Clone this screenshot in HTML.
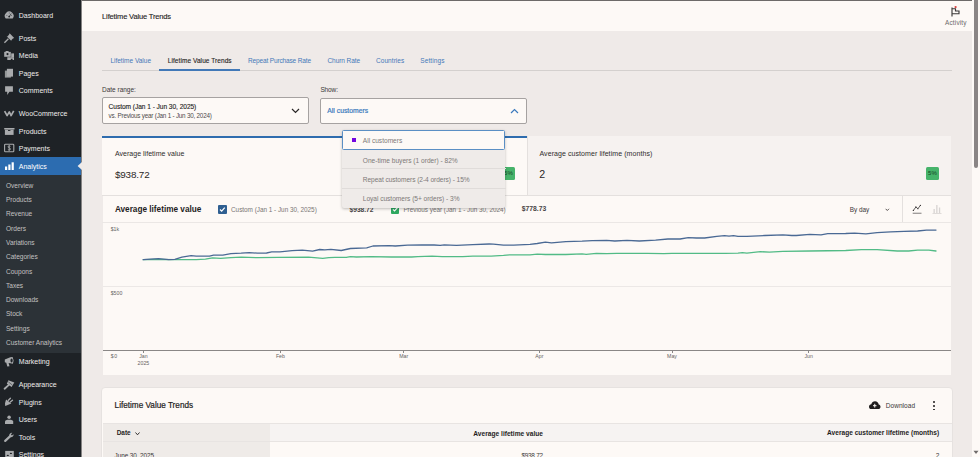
<!DOCTYPE html>
<html><head><meta charset="utf-8"><style>
html,body{margin:0;padding:0;width:980px;height:457px;overflow:hidden;background:#efeae8}
body{position:relative;font-family:"Liberation Sans",sans-serif}
div,span,svg{position:absolute}
span{white-space:nowrap}
</style></head><body>
<div style="left:0.00px;top:0.00px;width:980.00px;height:457.00px;background:#efeae8;"></div>
<div style="left:0.00px;top:0.00px;width:81.00px;height:457.00px;background:#1e2226;"></div>
<div style="left:81.00px;top:0.00px;width:1.00px;height:457.00px;background:#858383;"></div>
<div style="left:82.00px;top:0.00px;width:891.00px;height:31.00px;background:#fdf9f6;"></div>
<div style="left:82.00px;top:0.00px;width:891.00px;height:1.00px;background:#6d6a69;"></div>
<div style="left:0.00px;top:157.40px;width:81.00px;height:17.50px;background:#2c6cb0;"></div>
<div style="left:0.00px;top:174.90px;width:81.00px;height:177.90px;background:#2c3237;"></div>
<svg style="left:77px;top:162.4px;width:5px;height:8px;position:absolute" viewBox="0 0 5 8"><path d="M5 0 L0.6 4 L5 8Z" fill="#efeae8"/></svg>
<div style="left:102.00px;top:70.20px;width:849.50px;height:1.00px;background:#d4d0ce;"></div>
<div style="left:158.90px;top:69.40px;width:81.10px;height:1.60px;background:#4279b8;"></div>
<div style="left:102.00px;top:97.30px;width:206.90px;height:26.90px;background:#fdf9f6;border:1px solid #a6a2a1;border-radius:2px;box-sizing:border-box"></div>
<svg style="left:291px;top:108.2px;width:9px;height:6px;position:absolute" viewBox="0 0 9 6"><path d="M1 1 L4.5 4.5 L8 1" fill="none" stroke="#2a2727" stroke-width="1.2"/></svg>
<div style="left:320.20px;top:97.90px;width:207.10px;height:26.30px;background:#fdf9f6;border:1px solid #a6a2a1;border-radius:2px;box-sizing:border-box"></div>
<svg style="left:510px;top:108.2px;width:9px;height:6px;position:absolute" viewBox="0 0 9 6"><path d="M1 5 L4.5 1.5 L8 5" fill="none" stroke="#3a79bd" stroke-width="1.2"/></svg>
<div style="left:102.00px;top:135.70px;width:425.00px;height:59.60px;background:#fdf9f6;"></div>
<div style="left:527.00px;top:135.70px;width:424.00px;height:59.60px;background:#f6f2f0;"></div>
<div style="left:527.00px;top:135.70px;width:1.00px;height:59.60px;background:#e4e0de;"></div>
<div style="left:102.00px;top:135.70px;width:425.00px;height:2.10px;background:#2e6cae;"></div>
<div style="left:102.00px;top:195.00px;width:849.00px;height:1.00px;background:#e4e0de;"></div>
<div style="left:925.90px;top:166.50px;width:13.10px;height:13.10px;background:#46b36a;border-radius:1.5px"></div>
<div style="left:501.50px;top:166.70px;width:13.10px;height:13.10px;background:#46b36a;border-radius:1.5px"></div>
<div style="left:102.60px;top:195.30px;width:848.40px;height:180.00px;background:#fdf9f6;"></div>
<div style="left:102.00px;top:195.00px;width:849.00px;height:1.00px;background:#e4e0de;"></div>
<div style="left:102.00px;top:222.00px;width:849.00px;height:1.00px;background:#ebe7e5;"></div>
<div style="left:902.20px;top:195.30px;width:1.00px;height:27.00px;background:#e4e0de;"></div>
<div style="left:218.20px;top:205.00px;width:8.70px;height:8.70px;background:#2f5f91;border-radius:1px"></div>
<svg style="left:218.2px;top:205px;width:8.7px;height:8.7px;position:absolute" viewBox="0 0 10 10"><path d="M2.3 5.2 L4.2 7 L7.8 3" fill="none" stroke="#fff" stroke-width="1.4"/></svg>
<div style="left:390.80px;top:205.40px;width:8.40px;height:8.40px;background:#2ea860;border-radius:1px"></div>
<svg style="left:390.8px;top:205.4px;width:8.4px;height:8.4px;position:absolute" viewBox="0 0 10 10"><path d="M2.3 5.2 L4.2 7 L7.8 3" fill="none" stroke="#fff" stroke-width="1.4"/></svg>
<svg style="left:884.6px;top:208.2px;width:5px;height:3.5px;position:absolute" viewBox="0 0 5 3.5"><path d="M0.6 0.8 L2.3 2.5 L4 0.8" fill="none" stroke="#3b3838" stroke-width="0.85"/></svg>
<svg style="left:911.5px;top:203.5px;width:10.5px;height:10.5px;position:absolute" viewBox="0 0 10.5 10.5"><path d="M1.4 6.4 L3.9 3.0 L5.9 4.7 L8.4 1.4" fill="none" stroke="#3b3838" stroke-width="0.8"/><circle cx="1.4" cy="6.4" r="0.65" fill="#3b3838"/><circle cx="3.9" cy="3.0" r="0.65" fill="#3b3838"/><circle cx="5.9" cy="4.7" r="0.65" fill="#3b3838"/><circle cx="8.4" cy="1.4" r="0.65" fill="#3b3838"/><rect x="0.7" y="8.7" width="8.8" height="1.1" fill="#8a8786"/></svg>
<svg style="left:931.8px;top:203.5px;width:10.5px;height:10.5px;position:absolute" viewBox="0 0 10.5 10.5"><rect x="1.5" y="5" width="1.3" height="4" fill="#d8d4d2"/><rect x="4.2" y="1" width="1.3" height="8" fill="#d8d4d2"/><rect x="6.9" y="3.5" width="1.3" height="5.5" fill="#d8d4d2"/><rect x="0.5" y="9.2" width="9" height="0.9" fill="#d8d4d2"/></svg>
<div style="left:102.50px;top:286.40px;width:848.50px;height:0.80px;background:#ece8e6;"></div>
<div style="left:102.50px;top:350.00px;width:848.50px;height:0.90px;background:#8a8786;"></div>
<div style="left:143.00px;top:350.50px;width:0.80px;height:2.20px;background:#8a8786;"></div>
<div style="left:280.00px;top:350.50px;width:0.80px;height:2.20px;background:#8a8786;"></div>
<div style="left:403.30px;top:350.50px;width:0.80px;height:2.20px;background:#8a8786;"></div>
<div style="left:539.00px;top:350.50px;width:0.80px;height:2.20px;background:#8a8786;"></div>
<div style="left:671.60px;top:350.50px;width:0.80px;height:2.20px;background:#8a8786;"></div>
<div style="left:808.20px;top:350.50px;width:0.80px;height:2.20px;background:#8a8786;"></div>
<svg style="left:0;top:0;width:980px;height:457px;position:absolute" viewBox="0 0 980 457"><polyline points="143.2,259.7 155.4,259.3 175.8,259.7 196.2,259.7 205.4,259.1 212.6,257.9 220.7,258.3 230.9,257.7 241.1,257.2 257.4,257.7 277.9,257.4 308.5,257.2 322.8,258.3 328.9,257.7 335.0,257.4 346.3,257.4 350.4,256.6 356.5,257.0 370.8,256.6 391.2,257.0 411.6,257.0 417.8,256.6 432.0,256.2 442.2,256.6 462.7,256.6 472.9,256.2 491.2,256.2 503.5,255.4 509.6,254.8 530.0,254.8 537.2,254.1 545.4,254.5 565.8,254.5 582.1,253.9 586.2,254.3 596.4,253.3 606.6,253.7 616.8,253.3 647.4,253.3 663.8,253.7 671.9,253.3 725.0,253.3 738.0,253.2 742.4,252.6 746.9,253.2 760.4,251.7 769.4,252.1 782.9,251.4 809.8,251.0 845.7,250.5 861.4,249.6 877.1,249.6 897.3,251.0 908.6,251.0 917.6,250.1 928.8,250.1 936.0,251.0" fill="none" stroke="#52bb86" stroke-width="1.3" stroke-linejoin="round" stroke-linecap="round"/><polyline points="143.2,259.7 158.5,258.7 168.7,259.7 174.8,259.3 181.9,257.2 191.1,255.6 196.2,256.2 209.5,256.2 213.6,255.2 222.8,255.2 230.9,253.6 241.1,253.2 249.3,252.6 257.4,253.2 266.6,253.0 271.7,251.9 279.9,251.9 292.1,250.7 302.3,250.1 312.6,251.1 319.7,249.5 324.8,249.9 330.9,249.3 341.2,250.5 350.4,248.5 366.7,247.9 372.9,246.0 389.2,245.6 395.3,246.0 407.6,245.2 421.8,244.8 434.1,245.0 440.2,245.4 444.3,244.8 456.5,245.4 472.9,244.6 489.2,244.0 493.3,244.2 503.5,245.2 513.7,245.2 530.0,244.4 537.2,243.5 545.4,242.2 551.5,242.9 565.8,241.6 582.1,241.2 592.3,240.6 606.6,240.4 614.8,241.0 627.0,240.4 639.3,241.0 655.6,240.2 667.9,239.0 680.1,239.0 688.3,237.6 696.4,238.0 704.6,238.0 716.8,236.3 724.5,235.7 729.0,236.2 733.5,235.7 738.0,236.4 746.9,236.4 764.9,235.5 782.9,234.8 791.8,235.5 796.3,235.5 809.8,234.4 821.0,234.8 827.8,233.7 845.7,233.5 854.7,233.2 865.9,233.9 877.1,232.6 890.6,231.9 904.1,231.4 917.6,231.0 926.5,230.1 936.0,230.1" fill="none" stroke="#4a6994" stroke-width="1.3" stroke-linejoin="round" stroke-linecap="round"/></svg>
<div style="left:101.30px;top:387.30px;width:851.50px;height:80.00px;background:#fdf9f6;border-radius:4px;border:1px solid #e6e2e0;box-sizing:border-box"></div>
<svg style="left:869px;top:400.5px;width:11.5px;height:8.6px;position:absolute" viewBox="0 0 23 17"><path d="M5.5 16.5 C2 16.5 0 14 0 11.3 C0 8.6 2 6.6 4.6 6.4 C5.6 2.7 8.4 0.3 12 0.3 C16 0.3 19 3.2 19.4 6.8 C21.6 7.3 23 9.1 23 11.5 C23 14.3 20.9 16.5 18 16.5Z" fill="#1f1d1d"/><path d="M11.5 5.5 V13 M8 9.3 H15" stroke="#fdf9f6" stroke-width="2"/></svg>
<div style="left:933.20px;top:400.90px;width:1.90px;height:1.90px;background:#1f1d1d;border-radius:50%"></div>
<div style="left:933.20px;top:404.70px;width:1.90px;height:1.90px;background:#1f1d1d;border-radius:50%"></div>
<div style="left:933.20px;top:408.50px;width:1.90px;height:1.90px;background:#1f1d1d;border-radius:50%"></div>
<div style="left:102.80px;top:423.00px;width:849.00px;height:18.50px;background:#f6f3f2;"></div>
<div style="left:102.80px;top:423.00px;width:167.60px;height:40.00px;background:#efebe8;"></div>
<div style="left:102.80px;top:422.80px;width:849.00px;height:0.80px;background:#e8e4e2;"></div>
<div style="left:102.80px;top:441.30px;width:849.00px;height:0.80px;background:#e8e4e2;"></div>
<svg style="left:134.8px;top:431.5px;width:5px;height:3.5px;position:absolute" viewBox="0 0 5 3.5"><path d="M0.5 0.5 L2.5 2.8 L4.5 0.5" fill="none" stroke="#1f1d1d" stroke-width="0.9"/></svg>
<div style="left:341.6px;top:130.3px;width:163.5px;height:77.5px;background:#efebe9;border-radius:2px;box-shadow:0 1px 3px rgba(0,0,0,.25);z-index:10"></div>
<div style="left:341.80px;top:130.30px;width:163.50px;height:19.40px;background:#fdf9f6;border:1px solid #5b8fc4;border-radius:1.5px;box-sizing:border-box;z-index:10"></div>
<div style="left:341.60px;top:168.30px;width:164.00px;height:0.70px;background:#e0dcda;z-index:10"></div>
<div style="left:341.60px;top:188.20px;width:164.00px;height:0.70px;background:#e0dcda;z-index:10"></div>
<div style="left:351.60px;top:138.00px;width:4.40px;height:4.40px;background:#7205e0;z-index:10"></div>
<svg style="left:950px;top:4.5px;width:11px;height:12px;position:absolute" viewBox="0 0 11 12"><path d="M2 2.6 V11.5 M2 3.7 H5.5 V6 H9 V8.7 H2" fill="none" stroke="#3b3838" stroke-width="1.15"/><circle cx="5.6" cy="2.1" r="1.15" fill="#d94040"/></svg>
<div style="left:972.00px;top:0.00px;width:8.00px;height:457.00px;background:#fdf9f6;"></div>
<div style="left:973.80px;top:0.00px;width:4.60px;height:168.00px;background:#8a8585;border-radius:0 0 2.3px 2.3px"></div>
<svg style="left:973px;top:450px;width:6px;height:5px;position:absolute" viewBox="0 0 6 5"><path d="M0.5 0.8 H5.5 L3 4Z" fill="#6f6b6b"/></svg>
<svg style="left:2px;top:8px;width:16px;height:16px;position:absolute" viewBox="0 0 16 16"><path d="M3.7 10.6 A4.4 4.4 0 1 1 10.7 10.6 Z" fill="#a9abad"/><circle cx="7.2" cy="8.6" r="0.9" fill="#1e2226"/><path d="M7.2 8.6 L9.2 5.6" stroke="#1e2226" stroke-width="0.7"/><circle cx="4.9" cy="7.4" r="0.45" fill="#1e2226"/><circle cx="7.2" cy="5" r="0.45" fill="#1e2226"/><circle cx="9.6" cy="7.4" r="0.45" fill="#1e2226"/></svg>
<svg style="left:2px;top:30px;width:16px;height:16px;position:absolute" viewBox="0 0 16 16"><path d="M7.6 3.3 L12.2 7.9 L10.9 8.5 L9.3 10.2 L9.4 11 L4.6 6.3 L5.4 6.4 L7 4.7 Z" fill="#a9abad"/><path d="M2.4 12.8 L6.4 8.8" stroke="#a9abad" stroke-width="1.3"/></svg>
<svg style="left:2px;top:48px;width:16px;height:16px;position:absolute" viewBox="0 0 16 16"><rect x="2.2" y="3.9" width="6.6" height="4.9" fill="#a9abad"/><rect x="3.6" y="3" width="3" height="1.2" fill="#a9abad"/><circle cx="5.5" cy="6.1" r="1.1" fill="#1e2226"/><path d="M5.3 12 V9.3 H12 V12 H10.6 V10.8 L8.8 10.8 V12 Z" fill="#a9abad"/><rect x="9.2" y="5.4" width="2.8" height="4" fill="#a9abad"/></svg>
<svg style="left:2px;top:65px;width:16px;height:16px;position:absolute" viewBox="0 0 16 16"><rect x="2.9" y="5.6" width="6" height="7" fill="#a9abad" opacity="0.85"/><rect x="4.9" y="3.8" width="6.1" height="7.8" fill="#a9abad"/></svg>
<svg style="left:2px;top:82px;width:16px;height:16px;position:absolute" viewBox="0 0 16 16"><path d="M3.1 4.2 H10.9 V9.8 H7.4 L5.2 13 L5.2 9.8 H3.1 Z" fill="#a9abad"/></svg>
<svg style="left:2px;top:105px;width:16px;height:16px;position:absolute" viewBox="0 0 16 16"><path d="M2.6 6.2 L5.1 10.6 L7.3 6.9 L9.1 10.6 L11.7 5.9" fill="none" stroke="#a9abad" stroke-width="1.7" stroke-linejoin="round"/></svg>
<svg style="left:2px;top:123px;width:16px;height:16px;position:absolute" viewBox="0 0 16 16"><rect x="2.2" y="5" width="10.3" height="1.5" fill="#a9abad"/><rect x="2.9" y="6.6" width="8.7" height="5.3" fill="#a9abad"/><rect x="6" y="7" width="2.4" height="0.9" fill="#1e2226"/></svg>
<svg style="left:2px;top:140px;width:16px;height:16px;position:absolute" viewBox="0 0 16 16"><rect x="2.6" y="4.3" width="9.2" height="7.4" rx="0.8" fill="none" stroke="#a9abad" stroke-width="1.1"/><path d="M8.4 6.3 C7.8 5.7 6 5.8 6 6.9 C6 8.1 8.5 7.7 8.5 9 C8.5 10.1 6.6 10.2 5.9 9.5 M7.2 5.2 V10.8" fill="none" stroke="#a9abad" stroke-width="0.9"/></svg>
<svg style="left:4.9px;top:161.8px;width:9px;height:8.5px;position:absolute" viewBox="0 0 9 8.5"><rect x="0" y="4.5" width="2.2" height="4" fill="#fff"/><rect x="3.3" y="2.5" width="2.2" height="6" fill="#fff"/><rect x="6.6" y="0.3" width="2.2" height="8.2" fill="#fff"/></svg>
<svg style="left:2px;top:354px;width:16px;height:16px;position:absolute" viewBox="0 0 16 16"><path d="M2.8 5.6 L8.3 3.3 L10.6 3 L11.6 6.5 L10.9 9.8 L8.3 9.3 L6.6 9.1 L7.5 12.3 L5.3 12.5 L4.3 8.7 L2.8 8.3 Z" fill="#a9abad"/><ellipse cx="9.6" cy="6.4" rx="1.1" ry="2" fill="#1e2226"/></svg>
<svg style="left:2px;top:377px;width:16px;height:16px;position:absolute" viewBox="0 0 16 16"><path d="M6.4 3.2 L12.3 5.4 L9.6 9.9 L4.8 6.7 Z" fill="#a9abad"/><path d="M6.3 4.8 L10.3 8" stroke="#1e2226" stroke-width="0.5"/><path d="M2.6 11.7 L6.6 8.1" stroke="#a9abad" stroke-width="1.9" stroke-linecap="round"/></svg>
<svg style="left:2px;top:394px;width:16px;height:16px;position:absolute" viewBox="0 0 16 16"><path d="M4.1 5.4 L9.3 9.6 L5.2 11.3 L3.2 12 L3 9.3 Z" fill="#a9abad"/><path d="M6.4 6.2 L8.4 4.2 M8.3 8 L10.5 6.2" stroke="#a9abad" stroke-width="1.3" stroke-linecap="round"/></svg>
<svg style="left:2px;top:411px;width:16px;height:16px;position:absolute" viewBox="0 0 16 16"><circle cx="7.1" cy="6.2" r="1.75" fill="#a9abad"/><path d="M3 12.9 V10.6 C3 9.3 4.5 8.8 7.1 8.8 C9.7 8.8 11.2 9.3 11.2 10.6 V12.9 Z" fill="#a9abad"/></svg>
<svg style="left:2px;top:429px;width:16px;height:16px;position:absolute" viewBox="0 0 16 16"><path d="M3.2 11.9 L8 7.4" stroke="#a9abad" stroke-width="2.2" stroke-linecap="round"/><path d="M7.2 6.7 A2.7 2.7 0 0 1 10.3 3.8 L8.9 5.4 L9.9 6.6 L11.6 5.3 A2.7 2.7 0 0 1 8.5 8.3 Z" fill="#a9abad"/></svg>
<svg style="left:2px;top:441px;width:16px;height:16px;position:absolute" viewBox="0 0 16 16"><rect x="3.2" y="9.9" width="8.6" height="8" fill="#a9abad"/><ellipse cx="8.9" cy="12.4" rx="1.1" ry="0.7" fill="#1e2226"/><ellipse cx="5.8" cy="14.4" rx="1.1" ry="0.7" fill="#1e2226"/></svg>
<span style="left:18.80px;top:11.87px;font-size:7.000px;line-height:7.000px;font-weight:400;color:#efedec;letter-spacing:0.000px;">Dashboard</span>
<span style="left:18.80px;top:35.17px;font-size:7.000px;line-height:7.000px;font-weight:400;color:#efedec;letter-spacing:0.000px;">Posts</span>
<span style="left:18.80px;top:52.47px;font-size:7.000px;line-height:7.000px;font-weight:400;color:#efedec;letter-spacing:0.000px;">Media</span>
<span style="left:18.80px;top:69.87px;font-size:7.000px;line-height:7.000px;font-weight:400;color:#efedec;letter-spacing:0.000px;">Pages</span>
<span style="left:18.80px;top:87.17px;font-size:7.000px;line-height:7.000px;font-weight:400;color:#efedec;letter-spacing:0.000px;">Comments</span>
<span style="left:18.80px;top:110.17px;font-size:7.000px;line-height:7.000px;font-weight:400;color:#efedec;letter-spacing:0.000px;">WooCommerce</span>
<span style="left:18.80px;top:127.57px;font-size:7.000px;line-height:7.000px;font-weight:400;color:#efedec;letter-spacing:0.000px;">Products</span>
<span style="left:18.80px;top:144.87px;font-size:7.000px;line-height:7.000px;font-weight:400;color:#efedec;letter-spacing:0.000px;">Payments</span>
<span style="left:18.80px;top:162.67px;font-size:7.000px;line-height:7.000px;font-weight:400;color:#ffffff;letter-spacing:0.000px;">Analytics</span>
<span style="left:18.80px;top:358.27px;font-size:7.000px;line-height:7.000px;font-weight:400;color:#efedec;letter-spacing:0.000px;">Marketing</span>
<span style="left:18.80px;top:381.27px;font-size:7.000px;line-height:7.000px;font-weight:400;color:#efedec;letter-spacing:0.000px;">Appearance</span>
<span style="left:18.80px;top:398.57px;font-size:7.000px;line-height:7.000px;font-weight:400;color:#efedec;letter-spacing:0.000px;">Plugins</span>
<span style="left:18.80px;top:416.17px;font-size:7.000px;line-height:7.000px;font-weight:400;color:#efedec;letter-spacing:0.000px;">Users</span>
<span style="left:18.80px;top:433.77px;font-size:7.000px;line-height:7.000px;font-weight:400;color:#efedec;letter-spacing:0.000px;">Tools</span>
<span style="left:18.80px;top:450.87px;font-size:7.000px;line-height:7.000px;font-weight:400;color:#efedec;letter-spacing:0.000px;">Settings</span>
<span style="left:6.00px;top:182.69px;font-size:6.550px;line-height:6.550px;font-weight:400;color:#c3c1c1;letter-spacing:0.000px;">Overview</span>
<span style="left:6.00px;top:197.00px;font-size:6.550px;line-height:6.550px;font-weight:400;color:#c3c1c1;letter-spacing:0.000px;">Products</span>
<span style="left:6.00px;top:211.31px;font-size:6.550px;line-height:6.550px;font-weight:400;color:#c3c1c1;letter-spacing:0.000px;">Revenue</span>
<span style="left:6.00px;top:225.62px;font-size:6.550px;line-height:6.550px;font-weight:400;color:#c3c1c1;letter-spacing:0.000px;">Orders</span>
<span style="left:6.00px;top:239.93px;font-size:6.550px;line-height:6.550px;font-weight:400;color:#c3c1c1;letter-spacing:0.000px;">Variations</span>
<span style="left:6.00px;top:254.24px;font-size:6.550px;line-height:6.550px;font-weight:400;color:#c3c1c1;letter-spacing:0.000px;">Categories</span>
<span style="left:6.00px;top:268.55px;font-size:6.550px;line-height:6.550px;font-weight:400;color:#c3c1c1;letter-spacing:0.000px;">Coupons</span>
<span style="left:6.00px;top:282.86px;font-size:6.550px;line-height:6.550px;font-weight:400;color:#c3c1c1;letter-spacing:0.000px;">Taxes</span>
<span style="left:6.00px;top:297.17px;font-size:6.550px;line-height:6.550px;font-weight:400;color:#c3c1c1;letter-spacing:0.000px;">Downloads</span>
<span style="left:6.00px;top:311.48px;font-size:6.550px;line-height:6.550px;font-weight:400;color:#c3c1c1;letter-spacing:0.000px;">Stock</span>
<span style="left:6.00px;top:325.79px;font-size:6.550px;line-height:6.550px;font-weight:400;color:#c3c1c1;letter-spacing:0.000px;">Settings</span>
<span style="left:6.00px;top:340.10px;font-size:6.550px;line-height:6.550px;font-weight:400;color:#c3c1c1;letter-spacing:0.000px;">Customer Analytics</span>
<span style="left:102.10px;top:12.82px;font-size:7.500px;line-height:7.500px;font-weight:400;color:#1f1d1d;letter-spacing:-0.149px;-webkit-text-stroke:0.12px #1f1d1d">Lifetime Value Trends</span>
<span style="left:945.05px;top:19.86px;font-size:6.400px;line-height:6.400px;font-weight:400;color:#6c6a6a;letter-spacing:0.176px;">Activity</span>
<span style="left:110.40px;top:57.71px;font-size:6.500px;line-height:6.500px;font-weight:400;color:#4479b8;letter-spacing:-0.008px;">Lifetime Value</span>
<span style="left:167.80px;top:57.71px;font-size:6.500px;line-height:6.500px;font-weight:400;color:#1f1d1d;letter-spacing:0.071px;-webkit-text-stroke:0.12px #1f1d1d">Lifetime Value Trends</span>
<span style="left:248.00px;top:57.71px;font-size:6.500px;line-height:6.500px;font-weight:400;color:#4479b8;letter-spacing:-0.145px;">Repeat Purchase Rate</span>
<span style="left:327.50px;top:57.71px;font-size:6.500px;line-height:6.500px;font-weight:400;color:#4479b8;letter-spacing:-0.082px;">Churn Rate</span>
<span style="left:376.00px;top:57.71px;font-size:6.500px;line-height:6.500px;font-weight:400;color:#4479b8;letter-spacing:0.060px;">Countries</span>
<span style="left:420.30px;top:57.71px;font-size:6.500px;line-height:6.500px;font-weight:400;color:#4479b8;letter-spacing:0.102px;">Settings</span>
<span style="left:102.00px;top:87.02px;font-size:6.500px;line-height:6.500px;font-weight:400;color:#3b3838;letter-spacing:-0.007px;">Date range:</span>
<span style="left:320.40px;top:87.02px;font-size:6.500px;line-height:6.500px;font-weight:400;color:#3b3838;letter-spacing:-0.116px;">Show:</span>
<span style="left:108.60px;top:103.57px;font-size:6.600px;line-height:6.600px;font-weight:400;color:#1f1d1d;letter-spacing:-0.048px;-webkit-text-stroke:0.12px #1f1d1d">Custom (Jan 1 - Jun 30, 2025)</span>
<span style="left:108.60px;top:112.71px;font-size:6.300px;line-height:6.300px;font-weight:400;color:#4f4b4b;letter-spacing:-0.216px;">vs. Previous year (Jan 1 - Jun 30, 2024)</span>
<span style="left:327.30px;top:108.07px;font-size:6.800px;line-height:6.800px;font-weight:400;color:#3a79bd;letter-spacing:0.007px;-webkit-text-stroke:0.2px #3a79bd">All customers</span>
<span style="left:114.90px;top:149.57px;font-size:7.000px;line-height:7.000px;font-weight:400;color:#2f2c2c;letter-spacing:0.031px;">Average lifetime value</span>
<span style="left:114.90px;top:170.05px;font-size:9.900px;line-height:9.900px;font-weight:400;color:#2a2727;letter-spacing:-0.148px;">$938.72</span>
<span style="left:539.50px;top:149.57px;font-size:7.000px;line-height:7.000px;font-weight:400;color:#2f2c2c;letter-spacing:0.074px;">Average customer lifetime (months)</span>
<span style="left:539.30px;top:169.21px;font-size:10.600px;line-height:10.600px;font-weight:400;color:#2a2727;letter-spacing:0.000px;">2</span>
<span style="left:928.06px;top:170.46px;font-size:6.000px;line-height:6.000px;font-weight:400;color:#183f24;letter-spacing:0.000px;">5%</span>
<span style="left:504.06px;top:170.46px;font-size:6.000px;line-height:6.000px;font-weight:400;color:#183f24;letter-spacing:0.000px;">5%</span>
<span style="left:114.90px;top:206.36px;font-size:8.239px;line-height:8.239px;font-weight:700;color:#1f1d1d;letter-spacing:0.000px;">Average lifetime value</span>
<span style="left:231.00px;top:206.86px;font-size:6.400px;line-height:6.400px;font-weight:400;color:#7a7675;letter-spacing:-0.019px;">Custom (Jan 1 - Jun 30, 2025)</span>
<span style="left:349.60px;top:206.77px;font-size:6.584px;line-height:6.584px;font-weight:700;color:#4a4646;letter-spacing:0.000px;">$938.72</span>
<span style="left:403.40px;top:206.66px;font-size:6.400px;line-height:6.400px;font-weight:400;color:#7a7675;letter-spacing:-0.029px;">Previous year (Jan 1 - Jun 30, 2024)</span>
<span style="left:521.70px;top:206.37px;font-size:6.805px;line-height:6.805px;font-weight:700;color:#4a4646;letter-spacing:0.000px;">$778.73</span>
<span style="left:849.70px;top:206.86px;font-size:6.400px;line-height:6.400px;font-weight:400;color:#3b3838;letter-spacing:0.007px;">By day</span>
<span style="left:110.70px;top:227.05px;font-size:5.200px;line-height:5.200px;font-weight:400;color:#666362;letter-spacing:0.008px;">$1k</span>
<span style="left:110.70px;top:290.95px;font-size:5.200px;line-height:5.200px;font-weight:400;color:#666362;letter-spacing:0.044px;">$500</span>
<span style="left:110.70px;top:354.05px;font-size:5.200px;line-height:5.200px;font-weight:400;color:#666362;letter-spacing:0.716px;">$0</span>
<span style="left:139.21px;top:354.05px;font-size:5.200px;line-height:5.200px;font-weight:400;color:#666362;letter-spacing:0.000px;">Jan</span>
<span style="left:275.92px;top:354.05px;font-size:5.200px;line-height:5.200px;font-weight:400;color:#666362;letter-spacing:0.000px;">Feb</span>
<span style="left:399.22px;top:354.05px;font-size:5.200px;line-height:5.200px;font-weight:400;color:#666362;letter-spacing:0.000px;">Mar</span>
<span style="left:535.35px;top:354.05px;font-size:5.200px;line-height:5.200px;font-weight:400;color:#666362;letter-spacing:0.000px;">Apr</span>
<span style="left:667.09px;top:354.05px;font-size:5.200px;line-height:5.200px;font-weight:400;color:#666362;letter-spacing:0.000px;">May</span>
<span style="left:804.41px;top:354.05px;font-size:5.200px;line-height:5.200px;font-weight:400;color:#666362;letter-spacing:0.000px;">Jun</span>
<span style="left:137.62px;top:361.25px;font-size:5.200px;line-height:5.200px;font-weight:400;color:#666362;letter-spacing:0.000px;">2025</span>
<span style="left:114.60px;top:402.48px;font-size:8.200px;line-height:8.200px;font-weight:400;color:#1f1d1d;letter-spacing:-0.005px;-webkit-text-stroke:0.2px #1f1d1d">Lifetime Value Trends</span>
<span style="left:885.80px;top:403.12px;font-size:6.500px;line-height:6.500px;font-weight:400;color:#3b3838;letter-spacing:0.042px;">Download</span>
<span style="left:116.70px;top:430.44px;font-size:6.459px;line-height:6.459px;font-weight:700;color:#1f1d1d;letter-spacing:0.000px;">Date</span>
<span style="left:473.30px;top:430.65px;font-size:6.642px;line-height:6.642px;font-weight:700;color:#1f1d1d;letter-spacing:0.000px;">Average lifetime value</span>
<span style="left:827.10px;top:430.17px;font-size:6.597px;line-height:6.597px;font-weight:700;color:#1f1d1d;letter-spacing:0.000px;">Average customer lifetime (months)</span>
<span style="left:114.60px;top:453.36px;font-size:6.400px;line-height:6.400px;font-weight:400;color:#3b3838;letter-spacing:-0.089px;">June 30, 2025</span>
<span style="left:521.50px;top:453.36px;font-size:6.400px;line-height:6.400px;font-weight:400;color:#3b3838;letter-spacing:-0.273px;">$938.72</span>
<span style="left:935.73px;top:453.27px;font-size:6.600px;line-height:6.600px;font-weight:400;color:#3b3838;letter-spacing:0.000px;">2</span>
<span style="left:362.80px;top:137.87px;font-size:6.600px;line-height:6.600px;font-weight:400;color:#7d7978;letter-spacing:-0.009px;z-index:11">All customers</span>
<span style="left:362.80px;top:158.07px;font-size:6.600px;line-height:6.600px;font-weight:400;color:#7d7978;letter-spacing:-0.000px;z-index:11">One-time buyers (1 order) - 82%</span>
<span style="left:362.80px;top:177.27px;font-size:6.600px;line-height:6.600px;font-weight:400;color:#7d7978;letter-spacing:-0.057px;z-index:11">Repeat customers (2-4 orders) - 15%</span>
<span style="left:362.80px;top:196.47px;font-size:6.600px;line-height:6.600px;font-weight:400;color:#7d7978;letter-spacing:-0.031px;z-index:11">Loyal customers (5+ orders) - 3%</span>
</body></html>
